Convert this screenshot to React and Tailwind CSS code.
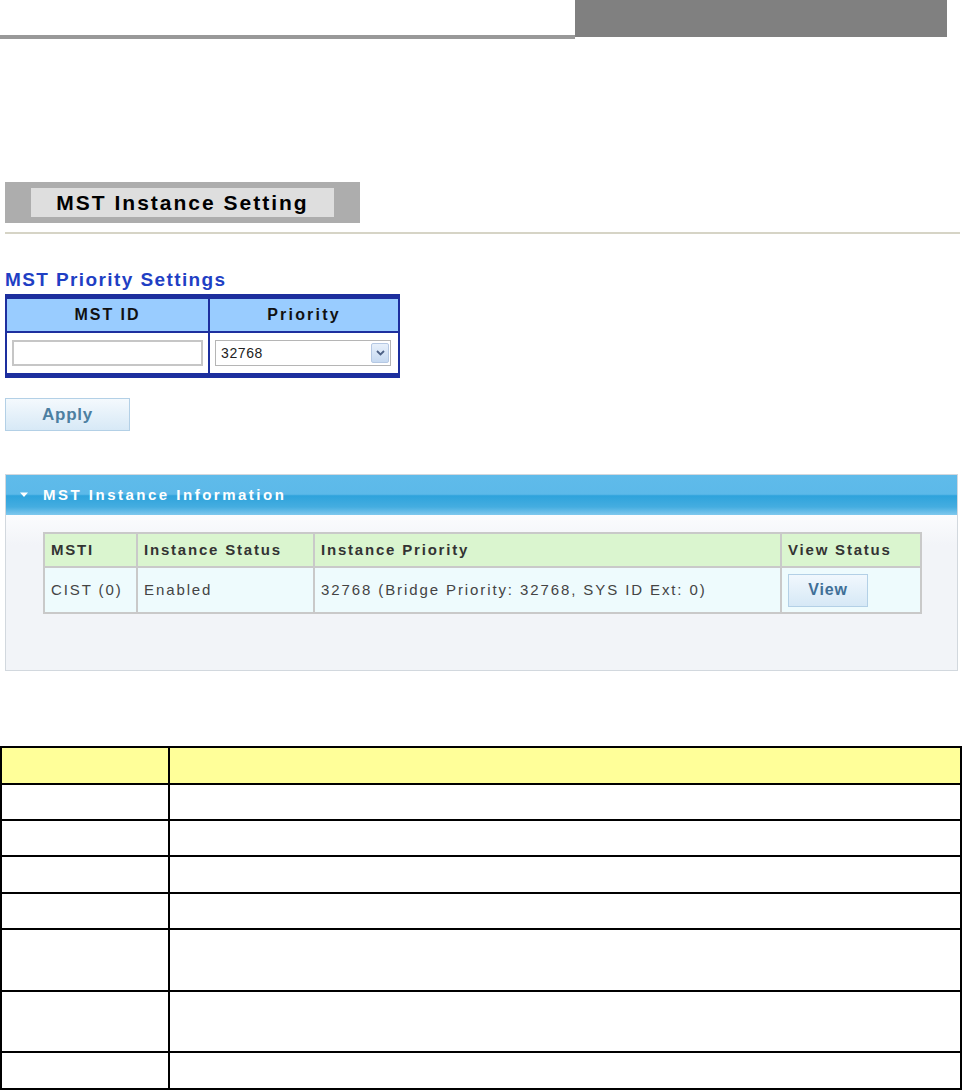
import React from 'react';

const font = { fontFamily: '"Liberation Sans", Arial, sans-serif' };

const infoRows = [
  { msti: 'CIST (0)', status: 'Enabled', priority: '32768 (Bridge Priority: 32768, SYS ID Ext: 0)' },
];

// heights of the empty description rows below the screenshot
const descRows = [36, 36, 37, 36, 62, 61, 37];

const App = () => {
  return (
    <div className="w-[964px] h-[1090px] bg-white overflow-hidden" style={font}>
      {/* Page header */}
      <div className="flex items-start">
        <div className="w-[575px] h-[39px] border-b-4 border-[#999999]" />
        <div className="w-[372px] h-[37px] bg-[#808080]" />
      </div>

      {/* Title */}
      <div className="mt-[143px] ml-[5px] w-[355px] h-[41px] bg-[#adadad] pl-[26px] pt-[6px]">
        <div className="w-[303px] h-[29px] bg-[#dedede] flex items-center justify-center text-[21px] font-bold text-black tracking-[2px]">
          MST Instance Setting
        </div>
      </div>
      <div className="mt-[9px] ml-[5px] w-[955px] h-[2px] bg-[#d6d4c6]" />

      {/* MST Priority Settings */}
      <div className="mt-[35px] ml-[5px] text-[19px] leading-[22px] font-bold text-[#1f3fc4] tracking-[1.4px]">
        MST Priority Settings
      </div>
      <div className="mt-[3px] ml-[5px] w-[395px] border-t-[5px] border-b-[5px] border-x-2 border-[#1d2f9e]">
        <div className="grid grid-cols-[203px_1fr] bg-[#99ccff] h-[34px] border-b-2 border-[#1d2f9e]">
          <div className="flex items-center justify-center border-r-2 border-[#1d2f9e] text-[16px] font-bold text-[#111] tracking-[2px]">
            MST ID
          </div>
          <div className="flex items-center justify-center text-[16px] font-bold text-[#111] tracking-[2.2px]">
            Priority
          </div>
        </div>
        <div className="grid grid-cols-[203px_1fr] bg-white h-[40px]">
          <div className="flex items-center pl-[5px] border-r-2 border-[#1d2f9e]">
            <input className="w-[191px] h-[26px] border-2 border-[#c6c6c6] bg-white outline-none" />
          </div>
          <div className="flex items-center pl-[5px]">
            <div className="w-[176px] h-[26px] border border-[#b5b5b5] flex items-center justify-between pl-[5px] pr-[1px] bg-white">
              <span className="text-[14px] tracking-[0.6px] text-[#222]">32768</span>
              <span className="w-[18px] h-[20px] bg-[linear-gradient(to_bottom,#e7f0fb,#c6d9f1)] border border-[#b5c8e3] rounded-[2px] flex items-center justify-center">
                <svg width="9" height="6" viewBox="0 0 9 6">
                  <path d="M1 1 L4.5 4.5 L8 1" fill="none" stroke="#4d6185" strokeWidth="1.8" />
                </svg>
              </span>
            </div>
          </div>
        </div>
      </div>

      {/* Apply */}
      <button className="mt-[20px] ml-[5px] w-[125px] h-[33px] border border-[#b3d0e6] bg-[linear-gradient(to_bottom,#f4f9fd,#d7e9f6)] text-[17px] font-bold text-[#4c7fa1] tracking-[0.8px] flex items-center justify-center">
        Apply
      </button>

      {/* MST Instance Information */}
      <div className="mt-[43px] ml-[5px] w-[953px] border border-[#d2d8de] bg-[#f2f4f8]">
        <div className="h-[40px] bg-[linear-gradient(to_bottom,#5fbbea_0%,#5cb9e9_48%,#2ea3dc_52%,#45ade0_80%,#7fc8ee_100%)] flex items-center pl-[14px] text-white text-[15px] font-bold tracking-[2.5px]">
          <svg width="8" height="6" viewBox="0 0 8 6" className="mr-[15px]">
            <path d="M0 0.5 L8 0.5 L4 5 Z" fill="#ffffff" />
          </svg>
          MST Instance Information
        </div>
        <div className="pt-[17px] pb-[56px] pl-[37px] bg-[linear-gradient(to_bottom,#fbfcfe,#f2f4f8_30px)]">
          <table className="border-collapse border-2 border-[#c9c9c9] text-[15px]">
            <thead>
              <tr className="bg-[#daf5cf] h-[34px] tracking-[1.8px]">
                <th className="w-[93px] border-2 border-[#c9c9c9] text-left pl-[6px] font-bold text-[#333]">MSTI</th>
                <th className="w-[177px] border-2 border-[#c9c9c9] text-left pl-[6px] font-bold text-[#333]">Instance Status</th>
                <th className="w-[467px] border-2 border-[#c9c9c9] text-left pl-[6px] font-bold text-[#333]">Instance Priority</th>
                <th className="w-[140px] border-2 border-[#c9c9c9] text-left pl-[6px] font-bold text-[#333]">View Status</th>
              </tr>
            </thead>
            <tbody>
              {infoRows.map((r) => (
                <tr key={r.msti} className="bg-[#eefbfd] h-[46px] tracking-[1.9px]">
                  <td className="border-2 border-[#c9c9c9] pl-[6px] text-[#444]">{r.msti}</td>
                  <td className="border-2 border-[#c9c9c9] pl-[6px] text-[#444]">{r.status}</td>
                  <td className="border-2 border-[#c9c9c9] pl-[6px] text-[#444]">{r.priority}</td>
                  <td className="border-2 border-[#c9c9c9] pl-[6px]">
                    <button className="w-[80px] h-[33px] border border-[#b3d0e6] bg-[linear-gradient(to_bottom,#f1f8fd,#d6e8f6)] text-[16px] font-bold text-[#3f6f97] tracking-[0.8px]">
                      View
                    </button>
                  </td>
                </tr>
              ))}
            </tbody>
          </table>
        </div>
      </div>

      {/* Description table */}
      <table className="mt-[75px] w-[962px] border-collapse border-2 border-black">
        <tbody>
          <tr className="bg-[#ffff99] h-[37px]">
            <td className="w-[168px] border-2 border-black" />
            <td className="border-2 border-black" />
          </tr>
          {descRows.map((h, i) => (
            <tr key={i} style={{ height: h }}>
              <td className="border-2 border-black" />
              <td className="border-2 border-black" />
            </tr>
          ))}
        </tbody>
      </table>
    </div>
  );
};

export default App;
